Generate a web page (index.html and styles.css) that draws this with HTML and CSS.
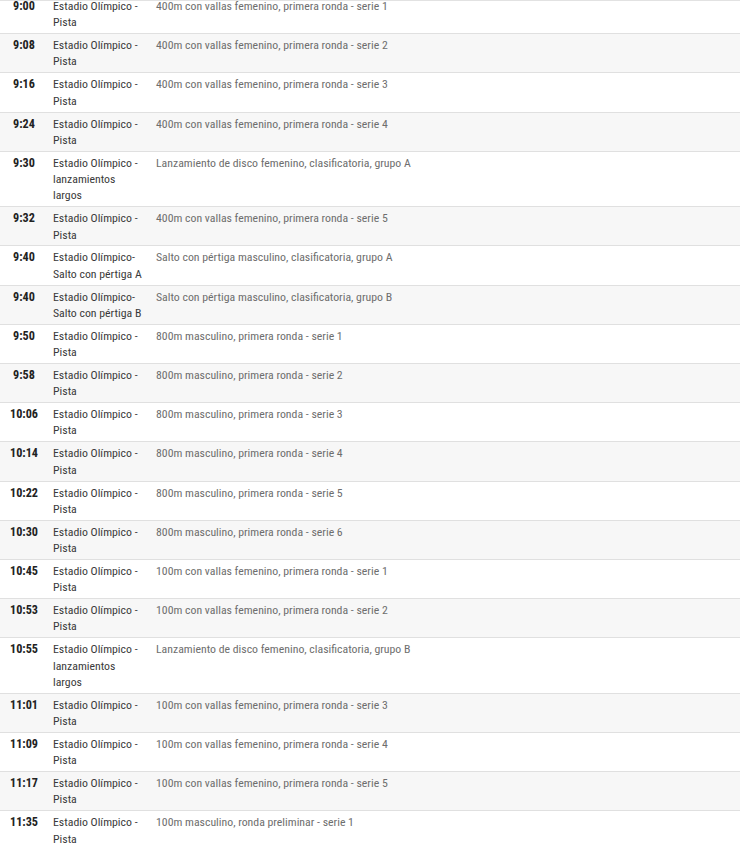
FILE: index.html
```html
<!DOCTYPE html>
<html lang="es">
<head>
<meta charset="utf-8">
<title>Programa</title>
<link rel="stylesheet" href="styles.css">
</head>
<body>
<div class="schedule">
  <div class="list">
    <div class="row"><div class="time">9:00</div><div class="venue">Estadio Olímpico - Pista</div><div class="event">400m con vallas femenino, primera ronda - serie 1</div></div>
    <div class="row"><div class="time">9:08</div><div class="venue">Estadio Olímpico - Pista</div><div class="event">400m con vallas femenino, primera ronda - serie 2</div></div>
    <div class="row"><div class="time">9:16</div><div class="venue">Estadio Olímpico - Pista</div><div class="event">400m con vallas femenino, primera ronda - serie 3</div></div>
    <div class="row"><div class="time">9:24</div><div class="venue">Estadio Olímpico - Pista</div><div class="event">400m con vallas femenino, primera ronda - serie 4</div></div>
    <div class="row"><div class="time">9:30</div><div class="venue">Estadio Olímpico - lanzamientos largos</div><div class="event">Lanzamiento de disco femenino, clasificatoria, grupo A</div></div>
    <div class="row"><div class="time">9:32</div><div class="venue">Estadio Olímpico - Pista</div><div class="event">400m con vallas femenino, primera ronda - serie 5</div></div>
    <div class="row"><div class="time">9:40</div><div class="venue">Estadio Olímpico-<br>Salto con pértiga A</div><div class="event">Salto con pértiga masculino, clasificatoria, grupo A</div></div>
    <div class="row"><div class="time">9:40</div><div class="venue">Estadio Olímpico-<br>Salto con pértiga B</div><div class="event">Salto con pértiga masculino, clasificatoria, grupo B</div></div>
    <div class="row"><div class="time">9:50</div><div class="venue">Estadio Olímpico - Pista</div><div class="event">800m masculino, primera ronda - serie 1</div></div>
    <div class="row"><div class="time">9:58</div><div class="venue">Estadio Olímpico - Pista</div><div class="event">800m masculino, primera ronda - serie 2</div></div>
    <div class="row"><div class="time">10:06</div><div class="venue">Estadio Olímpico - Pista</div><div class="event">800m masculino, primera ronda - serie 3</div></div>
    <div class="row"><div class="time">10:14</div><div class="venue">Estadio Olímpico - Pista</div><div class="event">800m masculino, primera ronda - serie 4</div></div>
    <div class="row"><div class="time">10:22</div><div class="venue">Estadio Olímpico - Pista</div><div class="event">800m masculino, primera ronda - serie 5</div></div>
    <div class="row"><div class="time">10:30</div><div class="venue">Estadio Olímpico - Pista</div><div class="event">800m masculino, primera ronda - serie 6</div></div>
    <div class="row"><div class="time">10:45</div><div class="venue">Estadio Olímpico - Pista</div><div class="event">100m con vallas femenino, primera ronda - serie 1</div></div>
    <div class="row"><div class="time">10:53</div><div class="venue">Estadio Olímpico - Pista</div><div class="event">100m con vallas femenino, primera ronda - serie 2</div></div>
    <div class="row"><div class="time">10:55</div><div class="venue">Estadio Olímpico - lanzamientos largos</div><div class="event">Lanzamiento de disco femenino, clasificatoria, grupo B</div></div>
    <div class="row"><div class="time">11:01</div><div class="venue">Estadio Olímpico - Pista</div><div class="event">100m con vallas femenino, primera ronda - serie 3</div></div>
    <div class="row"><div class="time">11:09</div><div class="venue">Estadio Olímpico - Pista</div><div class="event">100m con vallas femenino, primera ronda - serie 4</div></div>
    <div class="row"><div class="time">11:17</div><div class="venue">Estadio Olímpico - Pista</div><div class="event">100m con vallas femenino, primera ronda - serie 5</div></div>
    <div class="row"><div class="time">11:35</div><div class="venue">Estadio Olímpico - Pista</div><div class="event">100m masculino, ronda preliminar - serie 1</div></div>
  </div>
</div>
</body>
</html>
```
FILE: styles.css
```css
html, body {
  margin: 0;
  padding: 0;
  background: #fff;
}
body {
  font-family: "Roboto Condensed", "Roboto", sans-serif;
  font-stretch: condensed;
  font-size: 11.8px;
  color: #333;
}
.schedule {
  width: 740px;
  border-top: 1px solid #e2e2e2;
  overflow: hidden;
  box-sizing: border-box;
}
.list {
  margin-top: -6px;
}
.row {
  display: grid;
  grid-template-columns: 48px 103px 1fr;
  line-height: 16.3px;
  padding: 3px 0 2.6px;
  border-bottom: 1px solid #e0e0e0;
  background: #fff;
}
.row:nth-child(even) {
  background: #f7f7f7;
}
.time {
  text-align: center;
  font-weight: bold;
  font-size: 12.2px;
  color: #222;
}
.venue {
  padding: 0 6px 0 5px;
  color: #3a3a3a;
}
.event {
  padding-left: 5px;
  color: #6e6e6e;
}
```
